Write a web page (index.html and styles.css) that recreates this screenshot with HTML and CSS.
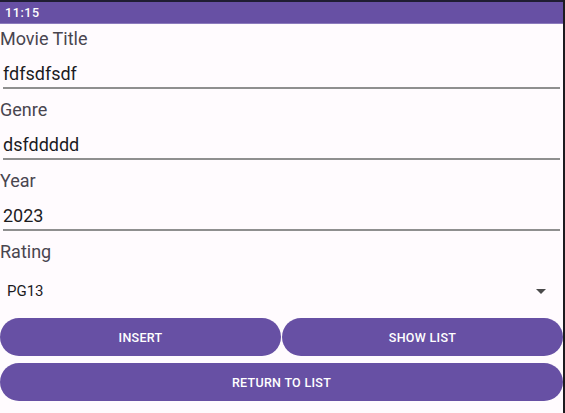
FILE: index.html
```html
<!DOCTYPE html>
<html>
<head>
<meta charset="utf-8">
<link rel="stylesheet" href="styles.css">
</head>
<body>
<div class="screen">
  <div class="status">11:15</div>
  <div class="form">
    <div class="label">Movie Title</div>
    <div class="field">fdfsdfsdf</div>
    <div class="label">Genre</div>
    <div class="field">dsfddddd</div>
    <div class="label">Year</div>
    <div class="field">2023</div>
    <div class="label">Rating</div>
    <div class="spinner">
      <span>PG13</span>
      <svg class="arrow" width="10" height="5" viewBox="0 0 10 5"><path d="M0 0 L10 0 L5 5 Z" fill="#4a4a4a"/></svg>
    </div>
    <div class="buttons">
      <div class="row">
        <button class="btn">INSERT</button>
        <button class="btn">SHOW LIST</button>
      </div>
      <button class="btn wide">RETURN TO LIST</button>
    </div>
  </div>
</div>
</body>
</html>
```
FILE: styles.css
```css
html {
  background: #1c1b1f;
}
body {
  margin: 0;
  width: 563px;
  height: 413px;
  background: #fffbfe;
  font-family: Roboto, "Noto Sans", sans-serif;
  overflow: hidden;
}
.screen {
  display: flex;
  flex-direction: column;
}
.status {
  height: 21px;
  border-top: 2px solid #1f1d33;
  border-bottom: 1px solid #8c7bbd;
  background: #6750a4;
  color: #fff;
  font-size: 12.5px;
  font-weight: 500;
  letter-spacing: 0.6px;
  line-height: 22px;
  padding-left: 5px;
  box-sizing: content-box;
}
.form {
  display: flex;
  flex-direction: column;
  padding-top: 4px;
}
.label {
  font-size: 18px;
  line-height: 21px;
  color: #49454f;
}
.field {
  margin: 0 3px 10px 3px;
  padding: 14px 0 3px 0;
  font-size: 18px;
  line-height: 21px;
  color: #1c1b1f;
  border-bottom: 2px solid #8f8f8f;
}
.spinner {
  display: flex;
  align-items: center;
  justify-content: space-between;
  height: 48px;
  padding: 5px 17px 0 7px;
  font-size: 15px;
  color: #1c1b1f;
  margin-bottom: 3px;
}
.arrow {
  display: block;
}
.buttons {
  display: flex;
  flex-direction: column;
  gap: 7px;
}
.row {
  display: flex;
  gap: 1px;
}
.btn {
  flex: 1;
  height: 38px;
  border: none;
  border-radius: 19px;
  background: #6750a4;
  color: #fff;
  font-family: Roboto, "Noto Sans", sans-serif;
  font-size: 12.5px;
  font-weight: 500;
  letter-spacing: 0.3px;
  padding: 0;
}
.wide {
  flex: none;
  width: 100%;
}
```
